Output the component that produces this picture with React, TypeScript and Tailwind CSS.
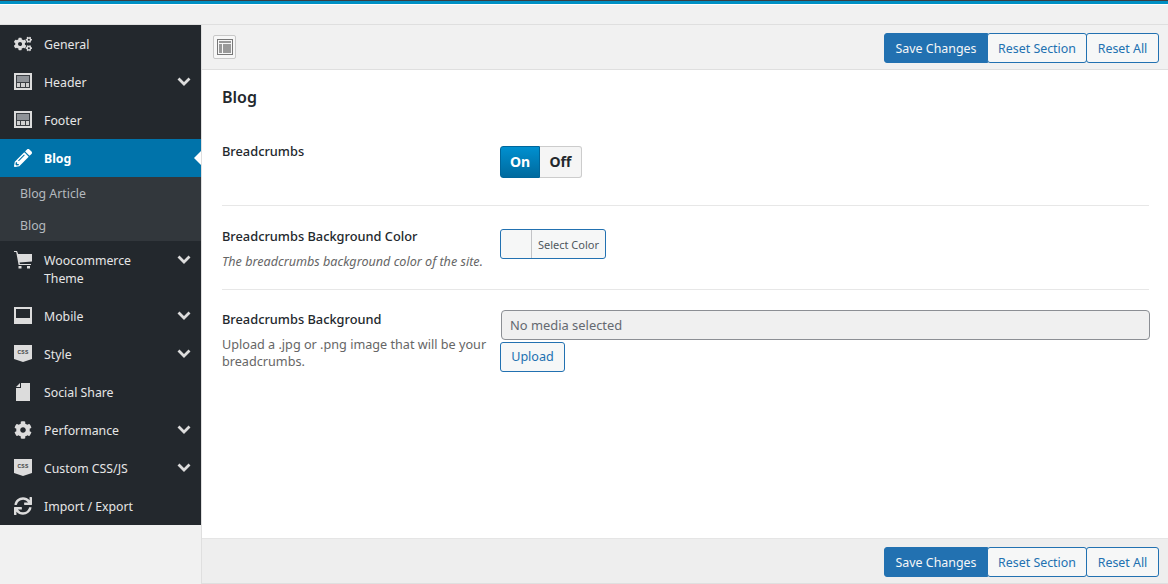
import React from "react";
import { FaCogs, FaCog, FaSync, FaPencilAlt } from "react-icons/fa";

const font = { fontFamily: '"Noto Sans", "Open Sans", sans-serif' };

// zone layout icon used by header and footer
const ZoneIcon = () => (
  <svg width="18" height="18" viewBox="0 0 18 18">
    <rect x="0" y="0" width="18" height="17" fill="#dcdcdc" />
    <rect x="2" y="2" width="14" height="13" fill="#3a3e43" />
    <rect x="3" y="3" width="12" height="6" fill="#8f9398" />
    <rect x="3" y="10" width="3" height="4" fill="#d0d0d0" />
    <rect x="7" y="10" width="4" height="4" fill="#d0d0d0" />
    <rect x="12" y="10" width="3" height="4" fill="#d0d0d0" />
  </svg>
);

const LaptopIcon = () => (
  <svg width="18" height="18" viewBox="0 0 18 18">
    <rect x="0" y="0" width="18" height="17" fill="#dcdcdc" />
    <rect x="2" y="2" width="14" height="9" fill="#23282d" />
  </svg>
);

const CssIcon = () => (
  <svg width="18" height="18" viewBox="0 0 18 18">
    <path d="M0 0h18v14l-9 3-9-3z" fill="#dcdcdc" />
    <text x="9" y="9" textAnchor="middle" fontSize="5" fontWeight="700" letterSpacing="0.3" fill="#3a3e43" fontFamily="Liberation Sans, sans-serif">CSS</text>
  </svg>
);

const DocIcon = () => (
  <svg width="18" height="18" viewBox="0 0 18 18">
    <path d="M7 0h9v18H2V5h5z" fill="#dcdcdc" />
    <path d="M6 0v4H2z" fill="#dcdcdc" />
  </svg>
);

const CartIcon = () => (
  <svg width="18" height="18" viewBox="0 0 18 18">
    <path d="M0 0h3l1.2 3H18v7.5l-12.5 1 .4 1.5H17v1H4.6L2.2 1H0z" fill="#dcdcdc" />
    <rect x="4.5" y="15" width="3" height="2.5" fill="#dcdcdc" />
    <rect x="13" y="15" width="3" height="2.5" fill="#dcdcdc" />
  </svg>
);

const Chevron = () => (
  <svg width="14" height="10" viewBox="0 0 14 10" className="absolute right-[10px] top-1/2 -mt-[6px]">
    <path d="M1.5 2.5 7 8l5.5-5.5" fill="none" stroke="#dcdcdc" strokeWidth="2.8" />
  </svg>
);

type Item = { label: string[]; icon: React.ReactNode; chevron?: boolean };

const gray = "#dcdcdc";
const before: Item[] = [
  { label: ["General"], icon: <FaCogs size={18} color={gray} /> },
  { label: ["Header"], icon: <ZoneIcon />, chevron: true },
  { label: ["Footer"], icon: <ZoneIcon /> },
];
const after: Item[] = [
  { label: ["Woocommerce", "Theme"], icon: <CartIcon />, chevron: true },
  { label: ["Mobile"], icon: <LaptopIcon />, chevron: true },
  { label: ["Style"], icon: <CssIcon />, chevron: true },
  { label: ["Social Share"], icon: <DocIcon /> },
  { label: ["Performance"], icon: <FaCog size={18} color={gray} />, chevron: true },
  { label: ["Custom CSS/JS"], icon: <CssIcon />, chevron: true },
  { label: ["Import / Export"], icon: <FaSync size={18} color={gray} /> },
];

const NavItem = ({ item }: { item: Item }) => {
  const tall = item.label.length > 1;
  return (
    <div className={`relative flex items-start pl-[14px] ${tall ? "h-[56px] pt-[10px]" : "h-[38px] pt-[10px]"} text-[12.3px] leading-[18px] text-[#e6e6e6]`}>
      <span className="w-[30px] h-[18px] shrink-0">{item.icon}</span>
      <span className="mt-px">
        {item.label.map((l) => (
          <div key={l}>{l}</div>
        ))}
      </span>
      {item.chevron && (
        <span className={`absolute right-0 top-0 w-[30px] h-[38px]`}>
          <Chevron />
        </span>
      )}
    </div>
  );
};

const Buttons = () => (
  <div className="mt-[2px] flex text-[12.4px] leading-[18px]">
    <button className="h-[30px] w-[104px] rounded-l-[3px] border border-[#2271b1] bg-[#2271b1] pt-px text-[#f6f7f7]">Save Changes</button>
    <button className="h-[30px] w-[100px] -ml-px rounded-[3px] border border-[#2271b1] bg-[#f6f7f7] pt-px text-[#2271b1]">Reset Section</button>
    <button className="h-[30px] w-[73px] -ml-px rounded-[3px] border border-[#2271b1] bg-[#f6f7f7] pt-px text-[#2271b1]">Reset All</button>
  </div>
);

export default function App() {
  return (
    <div className="flex h-[584px] w-[1168px] flex-col overflow-hidden bg-[#f1f1f1] text-[#444]" style={font}>
      {/* top bar */}
      <div className="h-[25px] shrink-0 border-b border-[#dfdfdf] bg-[#f1f1f1]">
        <div className="h-px bg-[#3a3f44]" />
        <div className="h-[3px] bg-[#0090c4]" />
        <div className="h-px bg-white" />
      </div>

      <div className="flex min-h-0 flex-1">
        {/* sidebar */}
        <aside className="w-[201px] shrink-0">
          <div className="bg-[#23282d]">
            {before.map((i) => (
              <NavItem key={i.label[0]} item={i} />
            ))}
            <div className="relative flex h-[38px] items-start bg-[#0073aa] pl-[14px] pt-[10px] text-[12.3px] font-bold leading-[18px] text-white">
              <span className="h-[18px] w-[30px]">
                <FaPencilAlt size={18} color="#fff" />
              </span>
              <span className="mt-px">Blog</span>
              <span className="absolute right-0 top-[12px] h-0 w-0 border-y-[7px] border-r-[7px] border-y-transparent border-r-white" />
            </div>
            <div className="h-[64px] bg-[#32373c] text-[12.3px] leading-[18px] text-[#b4b9be]">
              <div className="h-[32px] pl-[20px] pt-[8px]">Blog Article</div>
              <div className="h-[32px] pl-[20px] pt-[8px]">Blog</div>
            </div>
            {after.map((i) => (
              <NavItem key={i.label[0]} item={i} />
            ))}
          </div>
        </aside>

        {/* main panel */}
        <main className="flex min-w-0 flex-1 flex-col border-b border-l border-[#dfdfdf] bg-white">
          <header className="flex h-[45px] shrink-0 items-center justify-between border-b border-[#dfdfdf] bg-[#f1f1f1] pl-[11px] pr-[9px]">
            <span className="flex h-[24px] w-[23px] items-center justify-center rounded-[2px] border border-[#c8c8c8] bg-[#f7f7f7]">
              <svg width="16" height="16" viewBox="0 0 16 16">
                <rect x="0.5" y="0.5" width="15" height="15" fill="none" stroke="#777" />
                <rect x="2" y="2" width="12" height="2" fill="#9a9a9a" />
                <rect x="2" y="5" width="3" height="9" fill="#9a9a9a" />
                <rect x="6" y="5" width="8" height="9" fill="#9a9a9a" />
              </svg>
            </span>
            <Buttons />
          </header>

          <div className="min-h-0 flex-1 pl-[20px] pr-[19px]">
            <h2 className="pt-[15px] text-[16px] font-semibold leading-[24px] text-[#23282d]">Blog</h2>

            <div className="mt-[17px] grid h-[80px] grid-cols-[278px_1fr] border-b border-[#e7e7e7] pt-[16px]">
              <div className="text-[12.8px] font-medium leading-[18px] text-[#23282d]">Breadcrumbs</div>
              <div className="mt-[4px] flex h-[32px] w-[82px] text-[14px] font-bold leading-[30px]">
                <span className="w-[40px] rounded-l-[3px] border border-[#00669b] bg-gradient-to-b from-[#0090d0] to-[#006a9e] text-center text-white">On</span>
                <span className="w-[42px] rounded-r-[3px] border border-l-0 border-[#cccccc] bg-[#f5f5f5] text-center text-[#23282d]">Off</span>
              </div>
            </div>

            <div className="grid h-[84px] grid-cols-[278px_1fr] border-b border-[#e7e7e7] pt-[21px]">
              <div>
                <div className="text-[12.8px] font-medium leading-[18px] text-[#23282d]">Breadcrumbs Background Color</div>
                <div className="mt-[8px] whitespace-nowrap text-[12.6px] italic leading-[18px] text-[#666]">The breadcrumbs background color of the site.</div>
              </div>
              <div className="mt-[2px] flex h-[30px] w-[106px] overflow-hidden rounded-[3px] border border-[#2271b1] bg-[#f6f7f7]">
                <span className="w-[31px] border-r border-[#c3c4c7]" />
                <span className="flex-1 pt-px text-center text-[11px] leading-[28px] text-[#50575e]">Select Color</span>
              </div>
            </div>

            <div className="grid grid-cols-[278px_1fr] pt-[20px]">
              <div>
                <div className="text-[12.8px] font-medium leading-[18px] text-[#23282d]">Breadcrumbs Background</div>
                <div className="mt-[8px] text-[12.65px] leading-[17px] text-[#666]">
                  Upload a .jpg or .png image that will be your
                  <br />
                  breadcrumbs.
                </div>
              </div>
              <div>
                <div className="-mr-px ml-px h-[30px] rounded-[4px] border border-[#8c8f94] bg-[#f0f0f0] pl-[8px] text-[12.9px] leading-[28px] text-[#646970]">No media selected</div>
                <button className="mt-[2px] block h-[30px] w-[65px] rounded-[3px] border border-[#2271b1] bg-[#f6f7f7] pt-px text-[12.6px] text-[#2271b1]">Upload</button>
              </div>
            </div>
          </div>

          <footer className="flex h-[45px] shrink-0 items-center justify-end border-t border-[#e5e5e5] bg-[#eeeeee] pr-[9px]">
            <Buttons />
          </footer>
        </main>
      </div>
    </div>
  );
}
